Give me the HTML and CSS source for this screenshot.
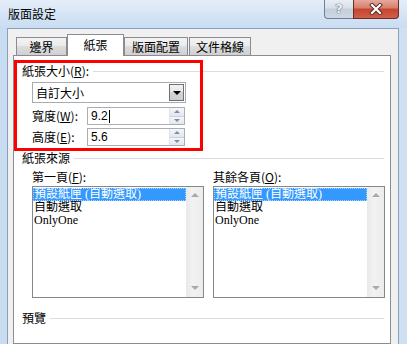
FILE: index.html
```html
<!DOCTYPE html>
<html lang="zh-Hant">
<head>
    <meta charset="UTF-8">
    <title>版面設定</title>
    <link rel="stylesheet" href="styles.css">
</head>
<body>
    <div class="window">
        <div class="titlebar">
            <span class="title">版面設定</span>
            <div class="caption-buttons">
                <span class="btn-help">?</span>
                <span class="btn-close">
                    <svg width="14" height="12" viewBox="0 0 14 12">
                        <path d="M3 2 L11 10 M11 2 L3 10" stroke="#4a2a24" stroke-width="4" stroke-linecap="square"/>
                        <path d="M3 2 L11 10 M11 2 L3 10" stroke="#ffffff" stroke-width="2.2" stroke-linecap="square"/>
                    </svg>
                </span>
            </div>
        </div>

        <div class="client">
            <div class="tabs">
                <div class="tab tab-margin">邊界</div>
                <div class="tab active tab-paper">紙張</div>
                <div class="tab tab-layout">版面配置</div>
                <div class="tab tab-grid">文件格線</div>
            </div>

            <div class="panel">
                <div class="group-head first">
                    <span>紙張大小(<u>R</u>):</span>
                </div>
                <div class="group-body">
                    <div class="combo">
                        <span class="combo-text">自訂大小</span>
                        <span class="combo-btn"><span class="tri-down"></span></span>
                    </div>
                    <div class="spin-row">
                        <span class="spin-label">寬度(<u>W</u>):</span>
                        <div class="spin">
                            <span class="spin-text">9.2<span class="caret"></span></span>
                            <span class="spin-btns"><span class="up"></span><span class="down"></span></span>
                        </div>
                    </div>
                    <div class="spin-row">
                        <span class="spin-label">高度(<u>E</u>):</span>
                        <div class="spin">
                            <span class="spin-text">5.6</span>
                            <span class="spin-btns"><span class="up"></span><span class="down"></span></span>
                        </div>
                    </div>
                </div>

                <div class="group-head source">
                    <span>紙張來源</span>
                </div>
                <div class="group-body columns">
                    <div class="col">
                        <span class="col-label">第一頁(<u>F</u>):</span>
                        <div class="listbox">
                            <div class="items">
                                <div class="item selected">預設紙匣 (自動選取)</div>
                                <div class="item">自動選取</div>
                                <div class="item">OnlyOne</div>
                            </div>
                            <div class="scrollbar"><span class="arr-up"></span><span class="arr-down"></span></div>
                        </div>
                    </div>
                    <div class="col">
                        <span class="col-label">其餘各頁(<u>O</u>):</span>
                        <div class="listbox">
                            <div class="items">
                                <div class="item selected">預設紙匣 (自動選取)</div>
                                <div class="item">自動選取</div>
                                <div class="item">OnlyOne</div>
                            </div>
                            <div class="scrollbar"><span class="arr-up"></span><span class="arr-down"></span></div>
                        </div>
                    </div>
                </div>

                <div class="group-head preview">
                    <span>預覽</span>
                </div>
            </div>
        </div>

        <!-- red annotation box drawn over the dialog -->
        <div class="highlight"></div>
    </div>
</body>
</html>
```

FILE: styles.css
```css
* {
    margin: 0;
    padding: 0;
    box-sizing: border-box;
}

body {
    width: 407px;
    height: 344px;
    overflow: hidden;
    font-family: "Noto Sans CJK TC", sans-serif;
    font-size: 12px;
    color: #000;
}

u {
    text-decoration: underline;
    text-underline-offset: 1px;
}

.window {
    position: relative;
    width: 407px;
    height: 344px;
    display: flex;
    flex-direction: column;
    background: linear-gradient(90deg, #c8dcf1, #d7e6f6 40%, #cfe0f3 100%);
    overflow: hidden;
}

.titlebar {
    height: 28px;
    display: flex;
    align-items: flex-start;
    padding: 0 8px 0 8px;
    background: linear-gradient(#e4eef9, #d3e3f5 60%, #c9dcf1);
}

.title {
    margin-top: 6px;
    font-size: 12px;
    line-height: 16px;
    color: #000;
}

.caption-buttons {
    margin-left: auto;
    display: flex;
    height: 19px;
}

.btn-help {
    width: 29px;
    height: 19px;
    border: 1px solid #6d7f99;
    border-top: none;
    border-right: none;
    border-radius: 0 0 0 4px;
    background: linear-gradient(#e9eef4, #d7dfe9 45%, #c4cfdc 50%, #cdd8e4);
    color: #f4f6f8;
    font-family: "DejaVu Sans", sans-serif;
    font-weight: bold;
    font-size: 13px;
    line-height: 17px;
    text-align: center;
    text-shadow: 0 0 1px #3a4a60, 0 0 1px #3a4a60;
}

.btn-close {
    width: 46px;
    height: 19px;
    border: 1px solid #6b2d26;
    border-top: none;
    border-radius: 0 0 4px 0;
    background: linear-gradient(#e4a99c, #d87e6c 45%, #c7432f 50%, #d0604a);
    display: flex;
    align-items: center;
    justify-content: center;
}

.client {
    flex: 1;
    margin: 0 8px 0 7px;
    border: 1px solid #8a9fba;
    border-bottom: none;
    background: #f0f0f0;
    padding: 5px 7px 0 5px;
    display: flex;
    flex-direction: column;
}

.tabs {
    height: 21px;
    display: flex;
    align-items: flex-end;
    padding-left: 3px;
    position: relative;
    z-index: 1;
}

.tab {
    height: 18px;
    border: 1px solid #898c95;
    border-bottom: none;
    background: linear-gradient(#f3f3f3, #ebebeb 45%, #dddddd 50%, #d0d0d0);
    text-align: center;
    font-size: 12px;
    line-height: 17px;
}

.tab.active {
    height: 22px;
    margin-bottom: -1px;
    background: #fff;
    line-height: 20px;
}

.tab-margin { width: 51px; }
.tab-paper { width: 57px; }
.tab-layout { width: 64px; }
.tab-grid { width: 62px; margin-left: 1px; }

.panel {
    flex: 1;
    background: #fff;
    border: 1px solid #898c95;
}

.group-head {
    height: 14px;
    display: flex;
    align-items: center;
    padding: 0 6px 0 8px;
    font-size: 12px;
    line-height: 14px;
}

.group-head::after {
    content: "";
    flex: 1;
    margin-left: 4px;
    border-top: 1px solid #d5dfe5;
}

.group-head.first { margin-top: 8px; }
.group-head.source { margin-top: 5px; }
.group-head.preview { margin-top: 13px; }

.group-body {
    padding: 0 5px 0 18px;
}

.combo {
    width: 154px;
    height: 21px;
    margin-top: 4px;
    border: 1px solid #a5acb5;
    display: flex;
    align-items: center;
    padding: 0 1px 0 3px;
}

.combo-text {
    flex: 1;
    line-height: 19px;
}

.combo-btn {
    width: 15px;
    height: 17px;
    border: 1px solid #707070;
    background: linear-gradient(#f2f2f2, #e6e6e6 50%, #d4d4d4 50%, #cfcfcf);
    display: flex;
    align-items: center;
    justify-content: center;
}

.tri-down {
    width: 0;
    height: 0;
    border-left: 4px solid transparent;
    border-right: 4px solid transparent;
    border-top: 4px solid #000;
}

.spin-row {
    height: 18px;
    margin-top: 4px;
    display: flex;
    align-items: center;
}

.spin-row + .spin-row { margin-top: 3px; }

.spin-label {
    width: 55px;
    line-height: 18px;
}

.spin {
    width: 98px;
    height: 18px;
    border: 1px solid #abadb3;
    display: flex;
    align-items: center;
    padding-left: 3px;
}

.spin-text {
    flex: 1;
    font-family: "Liberation Sans", sans-serif;
    font-size: 12px;
    line-height: 16px;
    display: flex;
    align-items: center;
}

.caret {
    width: 1px;
    height: 13px;
    margin-left: 1px;
    background: #000;
}

.spin-btns {
    width: 15px;
    height: 16px;
    display: flex;
    flex-direction: column;
    border-left: 1px solid #e1e4ea;
}

.spin-btns .up,
.spin-btns .down {
    flex: 1;
    display: flex;
    align-items: center;
    justify-content: center;
    background: linear-gradient(#f4f6f9, #e3e7ee);
}

.spin-btns .up { border-bottom: 1px solid #c9d1dc; }

.spin-btns .up::before,
.spin-btns .down::before {
    content: "";
    width: 0;
    height: 0;
    border-left: 3px solid transparent;
    border-right: 3px solid transparent;
}

.spin-btns .up::before { border-bottom: 3px solid #7c8ea6; }
.spin-btns .down::before { border-top: 3px solid #7c8ea6; }

.columns {
    display: grid;
    grid-template-columns: 1fr 1fr;
    column-gap: 9px;
    margin-top: 5px;
}

.col {
    display: flex;
    flex-direction: column;
}

.col-label {
    height: 14px;
    line-height: 14px;
}

.listbox {
    height: 112px;
    margin-top: 2px;
    border: 1px solid #828790;
    display: flex;
}

.items {
    flex: 1;
    padding: 1px 0 0 0;
}

.item {
    height: 13px;
    line-height: 13px;
    padding-left: 1px;
    font-family: "Liberation Serif", "Noto Sans CJK TC", serif;
    font-size: 12px;
    white-space: nowrap;
    overflow: hidden;
}

.item.selected {
    background: #3399ff;
    color: #fff;
    outline: 1px dotted #a8d0ff;
    outline-offset: -1px;
}

.scrollbar {
    width: 17px;
    background: linear-gradient(90deg, #e9e9e9, #f2f2f2 40%, #ececec);
    display: flex;
    flex-direction: column;
    justify-content: space-between;
    align-items: center;
    padding: 6px 0 7px;
}

.arr-up,
.arr-down {
    width: 0;
    height: 0;
    border-left: 4px solid transparent;
    border-right: 4px solid transparent;
}

.arr-up { border-bottom: 4px solid #a9a9a9; }
.arr-down { border-top: 4px solid #a9a9a9; }

.highlight {
    position: absolute;
    left: 14px;
    top: 60px;
    width: 189px;
    height: 91px;
    border: 3px solid #ff0000;
}
```
